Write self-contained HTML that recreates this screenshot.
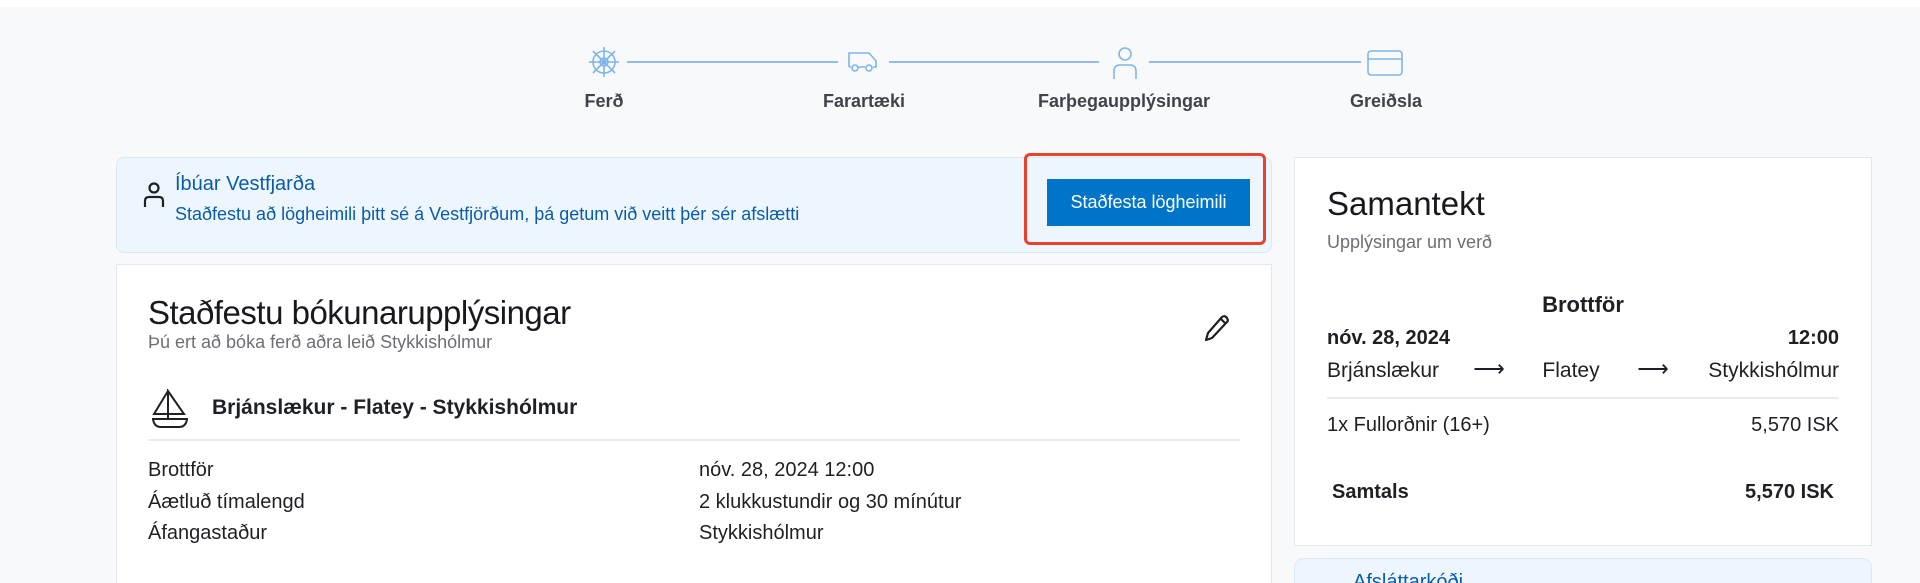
<!DOCTYPE html>
<html style="width:1920px;height:583px;overflow:hidden"><head><meta charset="utf-8"><style>
*{box-sizing:border-box;margin:0;padding:0}
html,body{width:1920px;height:583px;overflow:hidden}
body{background:#f8f9fb;font-family:"Liberation Sans",sans-serif;color:#1d2024;position:relative}
.a{position:absolute;white-space:nowrap}
.top{position:absolute;left:0;top:0;width:1920px;height:7px;background:#fff}
.lbl{font-size:18px;color:#3f444b;transform:translateX(-50%);font-weight:600}
.line{position:absolute;height:2px;background:#8fbde8;top:61px}
</style></head><body>
<div class="top"></div>
<svg class="a" style="left:588px;top:46px" width="32" height="32" viewBox="0 0 32 32" fill="none" stroke="#7fb6e6" stroke-width="1.6"><circle cx="16" cy="16" r="11"/><circle cx="16" cy="16" r="4"/><path d="M16 1v30M1 16h30M5 5l22 22M27 5L5 27"/></svg>
<div class="line" style="left:627px;width:211px"></div>
<svg class="a" style="left:846px;top:49px" width="36" height="26" viewBox="0 0 36 26" fill="none" stroke="#7fb6e6" stroke-width="1.6"><path d="M3 18V4h20l7 8v6h-3M12 18h7M3 18h2"/><circle cx="9" cy="19" r="3"/><circle cx="23" cy="19" r="3"/></svg>
<div class="line" style="left:889px;width:210px"></div>
<svg class="a" style="left:1111px;top:46px" width="28" height="34" viewBox="0 0 28 34" fill="none" stroke="#7fb6e6" stroke-width="1.6"><circle cx="14" cy="8" r="6"/><path d="M3 33V25q0-6 6-6h10q6 0 6 6v8"/></svg>
<div class="line" style="left:1149px;width:212px"></div>
<svg class="a" style="left:1367px;top:50px" width="36" height="26" viewBox="0 0 36 26" fill="none" stroke="#7fb6e6" stroke-width="1.6"><rect x="1" y="1" width="34" height="24" rx="3"/><path d="M1 9h34"/></svg>
<div class="a lbl" style="left:604px;top:91px">Ferð</div>
<div class="a lbl" style="left:864px;top:91px">Farartæki</div>
<div class="a lbl" style="left:1124px;top:91px">Farþegaupplýsingar</div>
<div class="a lbl" style="left:1386px;top:91px">Greiðsla</div>

<div class="a" style="left:116px;top:157px;width:1156px;height:96px;background:#eef6fd;border:1px solid #dbe7f2;border-radius:8px"></div>
<svg class="a" style="left:143px;top:182px" width="22" height="26" viewBox="0 0 22 26" fill="none" stroke="#1d2024" stroke-width="2.2"><circle cx="11" cy="6" r="4.5"/><path d="M2 25v-6q0-4 4-4h10q4 0 4 4v6"/></svg>
<div class="a" style="left:175px;top:173px;font-size:20px;color:#0a5ca8">Íbúar Vestfjarða</div>
<div class="a" style="left:175px;top:204px;font-size:18px;color:#0a5ca8">Staðfestu að lögheimili þitt sé á Vestfjörðum, þá getum við veitt þér sér afslætti</div>
<div class="a" style="left:1024px;top:153px;width:242px;height:92px;border:3px solid #e8412c;border-radius:6px"></div>
<div class="a" style="left:1047px;top:179px;width:203px;height:47px;background:#0074c8;color:#fff;font-size:18px;text-align:center;line-height:47px">Staðfesta lögheimili</div>

<div class="a" style="left:116px;top:264px;width:1156px;height:319px;background:#fff;border:1px solid #e3e8ee;border-bottom:none"></div>
<div class="a" style="left:148px;top:294px;font-size:33px;color:#16191d;letter-spacing:-0.5px">Staðfestu bókunarupplýsingar</div>
<div class="a" style="left:148px;top:332px;font-size:18px;color:#6b6f75">Þú ert að bóka ferð aðra leið Stykkishólmur</div>
<svg class="a" style="left:1203px;top:313px" width="28" height="30" viewBox="0 0 28 30" fill="none" stroke="#1d2024" stroke-width="2.2" stroke-linejoin="round"><path d="M3 27l2-7L19 4q3-2 5 1t-1 5L9 25z"/><path d="M18 6l4 4"/></svg>
<svg class="a" style="left:150px;top:389px" width="40" height="40" viewBox="0 0 40 40" fill="none" stroke="#1d2024" stroke-width="2"><path d="M18 2L4 25h30L18 2v28"/><path d="M2 30h36M3 30q1 8 8 8h18q7 0 8-8"/></svg>
<div class="a" style="left:212px;top:396px;font-size:21px;font-weight:600;color:#1d2024">Brjánslækur - Flatey - Stykkishólmur</div>
<div class="a" style="left:148px;top:439px;width:1092px;height:2px;background:#e8ebef"></div>
<div class="a" style="left:148px;top:455px;font-size:20px;line-height:31.5px;color:#1d2024">Brottför<br>Áætluð tímalengd<br>Áfangastaður</div>
<div class="a" style="left:699px;top:455px;font-size:20px;line-height:31.5px;color:#1d2024">nóv. 28, 2024 12:00<br>2 klukkustundir og 30 mínútur<br>Stykkishólmur</div>

<div class="a" style="left:1294px;top:157px;width:578px;height:389px;background:#fff;border:1px solid #e3e8ee"></div>
<div class="a" style="left:1327px;top:185px;font-size:33px;color:#16191d">Samantekt</div>
<div class="a" style="left:1327px;top:232px;font-size:18px;color:#6b6f75">Upplýsingar um verð</div>
<div class="a" style="left:1583px;top:292px;font-size:22px;font-weight:bold;color:#1d2024;transform:translateX(-50%)">Brottför</div>
<div class="a" style="left:1327px;top:327px;font-size:20px;font-weight:bold">nóv. 28, 2024</div>
<div class="a" style="left:1839px;top:327px;font-size:20px;font-weight:bold;transform:translateX(-100%)">12:00</div>
<div class="a" style="left:1327px;top:359px;font-size:21px">Brjánslækur</div>
<div class="a" style="left:1489px;top:356px;font-size:22px;transform:translateX(-50%)">⟶</div>
<div class="a" style="left:1571px;top:359px;font-size:21px;transform:translateX(-50%)">Flatey</div>
<div class="a" style="left:1653px;top:356px;font-size:22px;transform:translateX(-50%)">⟶</div>
<div class="a" style="left:1839px;top:359px;font-size:21px;transform:translateX(-100%)">Stykkishólmur</div>
<div class="a" style="left:1327px;top:397px;width:512px;height:2px;background:#e8ebef"></div>
<div class="a" style="left:1327px;top:414px;font-size:20px">1x Fullorðnir (16+)</div>
<div class="a" style="left:1839px;top:414px;font-size:20px;transform:translateX(-100%)">5,570 ISK</div>
<div class="a" style="left:1332px;top:481px;font-size:20px;font-weight:bold">Samtals</div>
<div class="a" style="left:1834px;top:481px;font-size:20px;font-weight:bold;transform:translateX(-100%)">5,570 ISK</div>
<div class="a" style="left:1294px;top:558px;width:578px;height:25px;background:#eef6fd;border:1px solid #dbe7f2;border-bottom:none;border-radius:10px 10px 0 0;overflow:hidden">
<div class="a" style="left:58px;top:12px;font-size:20px;color:#0a5ca8">Afsláttarkóði</div></div>
</body></html>
